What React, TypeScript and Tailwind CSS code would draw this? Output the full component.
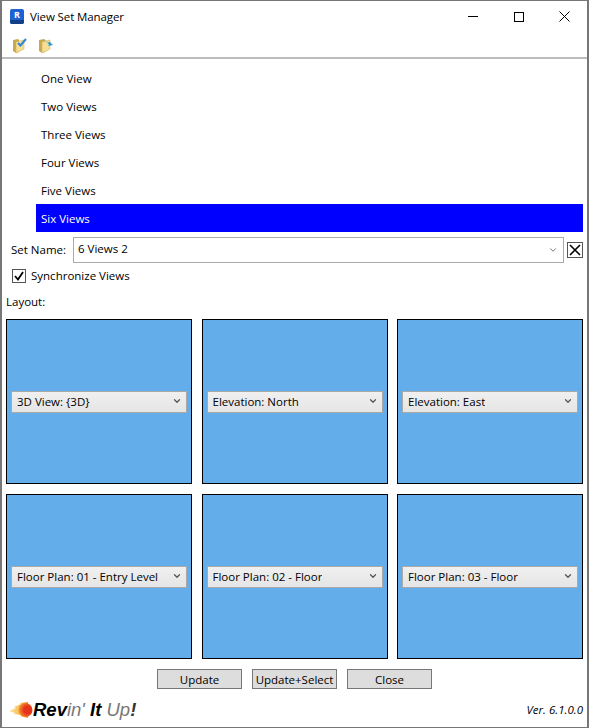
import { ChevronDown } from 'lucide-react';

const viewSets = ['One View', 'Two Views', 'Three Views', 'Four Views', 'Five Views', 'Six Views'];
const panels = [
  '3D View: {3D}',
  'Elevation: North',
  'Elevation: East',
  'Floor Plan: 01 - Entry Level',
  'Floor Plan: 02 - Floor',
  'Floor Plan: 03 - Floor',
];

const FolderIcon = ({ variant }: { variant: 'a' | 'b' }) => (
  <svg width="16" height="18" viewBox="0 0 16 18" aria-hidden="true">
    <path d="M1 4l5-1 1 1v12l-3 1-3-2z" fill="#c9a94e" />
    <path d="M4 6l8-2v9l-8 4z" fill="#f6df92" stroke="#d4b45c" strokeWidth="0.6" />
    {variant === 'a' ? (
      <path d="M6 7l2.5 2.5L14 3" fill="none" stroke="#2a85dc" strokeWidth="2" />
    ) : (
      <path d="M6 3l4 4 1.5-1.5L15 9l-5 1 1-1.500-4-4z" fill="#2a9be0" />
    )}
  </svg>
);

const Logo = () => (
  <svg width="25" height="18" viewBox="0 0 25 18" aria-hidden="true">
    <defs>
      <linearGradient id="flame" x1="0" y1="0" x2="1" y2="0">
        <stop offset="0" stopColor="#fde6a0" />
        <stop offset="0.55" stopColor="#fbbf55" />
        <stop offset="1" stopColor="#f08a2a" />
      </linearGradient>
      <radialGradient id="head" cx="0.65" cy="0.5" r="0.65">
        <stop offset="0.4" stopColor="#e5321a" />
        <stop offset="1" stopColor="#f59a2e" />
      </radialGradient>
    </defs>
    <path d="M1 10 L8 7 L6 6 L13 3 L12 2 L20 1 L20 17 L12 15 L13 14 L6 13 L7 12z" fill="url(#flame)" />
    <circle cx="17.500" cy="9" r="7" fill="url(#head)" />
  </svg>
);

export default function App() {
  return (
    <div className="flex h-[728px] w-[589px] flex-col border-x-2 border-y border-[#777] bg-white font-['Open_Sans','Noto_Sans',sans-serif] text-[11.5px] text-black">
      <div className="flex h-[31px] shrink-0 items-center pl-[8px]">
        <div className="flex h-[15px] w-[14px] flex-col overflow-hidden rounded-[2px] bg-[#1d62d0] text-center text-[9px] leading-[11px] font-bold text-white">
          <span>R</span>
          <div className="h-[4px] bg-[#123f86]" />
        </div>
        <span className="ml-[6px] tracking-[-0.1px]">View Set Manager</span>
        <div className="ml-auto flex items-center">
          <div className="flex h-[30px] w-[46px] items-center justify-center">
            <div className="h-px w-[10px] bg-black" />
          </div>
          <div className="flex h-[30px] w-[46px] items-center justify-center">
            <div className="h-[10px] w-[10px] border border-black" />
          </div>
          <div className="flex h-[30px] w-[45px] items-center justify-center">
            <svg width="11" height="11" viewBox="0 0 11 11" aria-hidden="true">
              <path d="M0.5 0.5l10 10M10.5 0.5l-10 10" stroke="#000" strokeWidth="1" fill="none" />
            </svg>
          </div>
        </div>
      </div>

      <div className="flex h-[27px] shrink-0 items-center gap-[10px] border-b-2 border-[#bdbdbd] pl-[10px]">
        <FolderIcon variant="a" />
        <FolderIcon variant="b" />
      </div>

      <ul className="mt-[5px] mr-[4px] ml-[34px]">
        {viewSets.map((name) => (
          <li key={name} className={`flex h-[28px] items-center pt-[2px] pl-[5px] ${name === 'Six Views' ? 'bg-[#0000ff] text-white' : ''}`}>
            {name}
          </li>
        ))}
      </ul>

      <div className="mt-[5px] flex items-center pr-[4px] pl-[9px]">
        <span className="w-[62px]">Set Name:</span>
        <div className="flex h-[26px] w-[491px] items-center justify-between border border-[#ababab] pr-[5px] pl-[4px]">
          <span className="-mt-[2px]">6 Views 2</span>
          <ChevronDown className="h-[10px] w-[10px] text-[#555]" />
        </div>
        <div className="ml-[3px] flex h-[16px] w-[16px] items-center justify-center border border-[#555]">
          <svg width="12" height="12" viewBox="0 0 12 12" aria-hidden="true">
            <path d="M1 1l10 10M11 1L1 11" stroke="#000" strokeWidth="1.6" fill="none" />
          </svg>
        </div>
      </div>

      <div className="mt-[4px] flex items-center pl-[10px]">
        <div className="flex h-[14px] w-[14px] items-center justify-center border border-[#555]">
          <svg width="12" height="12" viewBox="0 0 12 12" aria-hidden="true">
            <path d="M2 6l3 3.5L10 2" stroke="#000" strokeWidth="1.8" fill="none" />
          </svg>
        </div>
        <span className="ml-[5px]">Synchronize Views</span>
      </div>

      <div className="mt-[10px] h-[16px] pl-[4px] leading-[16px]">Layout:</div>

      <div className="mt-[9px] mr-[4px] ml-[4px] grid grid-cols-[186px_186px_186px] gap-x-[9.5px] gap-y-[10px]">
        {panels.map((label) => (
          <div key={label} className="flex h-[165px] items-center justify-center border border-black bg-[#63aeea]">
            <div className="flex h-[22px] w-[176px] items-center justify-between border border-[#a9a9a9] bg-linear-to-b from-[#f0f0f0] to-[#e5e5e5] pr-[4px] pl-[5px]">
              <span className="truncate">{label}</span>
              <ChevronDown className="-mt-[2px] h-[10px] w-[10px] shrink-0 text-[#555]" strokeWidth={3} />
            </div>
          </div>
        ))}
      </div>

      <div className="mt-[10px] flex justify-center gap-[10px]">
        {['Update', 'Update+Select', 'Close'].map((label) => (
          <div key={label} className="flex h-[20px] w-[85px] items-center justify-center border border-[#777] bg-[#dddddd] whitespace-nowrap">
            {label}
          </div>
        ))}
      </div>

      <div className="mt-auto mb-[7px] flex items-center justify-between pr-[4px] pl-[6px]">
        <div className="flex items-center font-['Liberation_Sans',sans-serif] text-[18.5px] leading-[20px] italic">
          <Logo />
          <span className="font-bold">Rev</span>
          <span className="text-[#777]">in'&nbsp;</span>
          <span className="font-bold">It&nbsp;</span>
          <span className="text-[#777]">Up</span>
          <span className="font-bold text-[#333]">!</span>
        </div>
        <span className="italic">Ver. 6.1.0.0</span>
      </div>
    </div>
  );
}
